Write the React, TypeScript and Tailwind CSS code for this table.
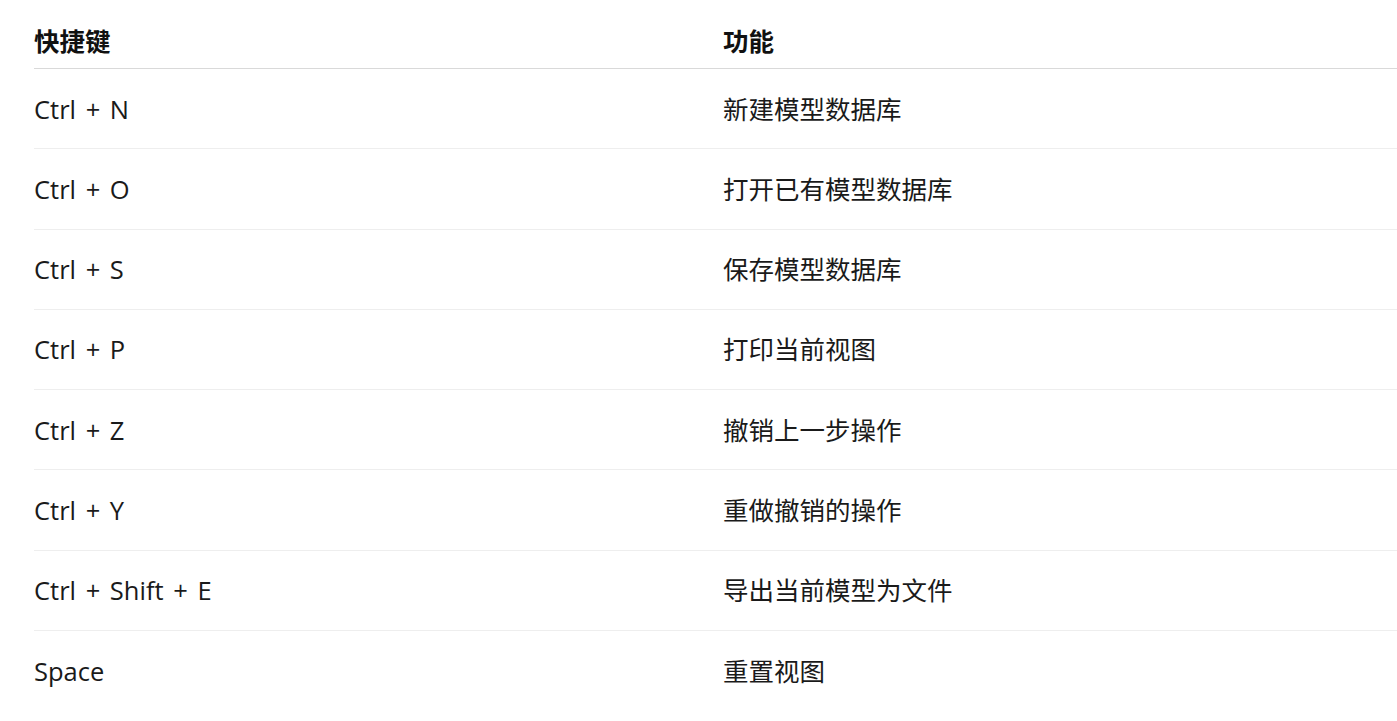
import React from "react";

const rows: [string, string][] = [
  ["Ctrl + N", "新建模型数据库"],
  ["Ctrl + O", "打开已有模型数据库"],
  ["Ctrl + S", "保存模型数据库"],
  ["Ctrl + P", "打印当前视图"],
  ["Ctrl + Z", "撤销上一步操作"],
  ["Ctrl + Y", "重做撤销的操作"],
  ["Ctrl + Shift + E", "导出当前模型为文件"],
  ["Space", "重置视图"],
];

export default function App() {
  return (
    <div
      className="min-h-screen w-full bg-white pl-[34px] text-[25.5px] text-[#1a1a1a]"
      style={{ fontFamily: '"Segoe UI", "Open Sans", "Noto Sans CJK SC", sans-serif' }}
    >
      <div className="grid h-[69px] grid-cols-[689px_1fr] items-center border-b-[1.5px] border-[#d9d9d9] pt-[14px] font-bold text-[#111]">
        <div>快捷键</div>
        <div>功能</div>
      </div>
      {rows.map(([k, f], i) => (
        <div
          key={k}
          className={
            "grid h-[80.3px] grid-cols-[689px_1fr] items-center " +
            (i < rows.length - 1 ? "border-b border-[#eeeeee]" : "")
          }
        >
          <div className="[word-spacing:3px]">{k}</div>
          <div>{f}</div>
        </div>
      ))}
    </div>
  );
}
